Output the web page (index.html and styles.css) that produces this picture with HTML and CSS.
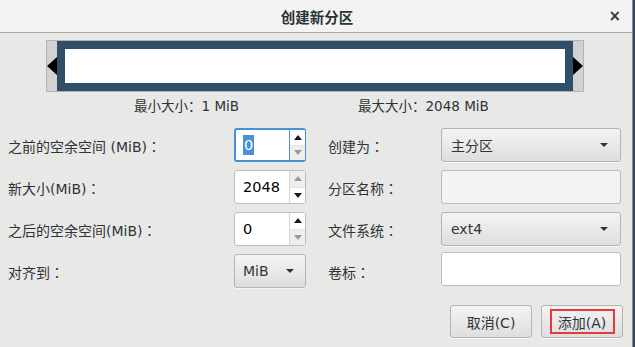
FILE: index.html
```html
<!DOCTYPE html>
<html lang="zh-CN">
<head>
<meta charset="utf-8">
<title>创建新分区</title>
<link rel="stylesheet" href="styles.css">
</head>
<body>
<div class="dialog">
  <div class="titlebar">
    <span class="title">创建新分区</span>
    <span class="close">×</span>
  </div>

  <div class="pbar">
    <div class="arrow arrow-left"></div>
    <div class="navy"><div class="white"></div></div>
    <div class="arrow arrow-right"></div>
  </div>

  <div class="sizes">
    <span class="size-min">最小大小<span class="c">：</span>1 MiB</span>
    <span class="size-max">最大大小<span class="c">：</span>2048 MiB</span>
  </div>

  <div class="form">
    <div class="label">之前的空余空间 (MiB)<span class="c">：</span></div>
    <div class="spin focused">
      <div class="spin-val"><span class="sel">0</span></div>
      <div class="spin-btns">
        <div class="sb up"><span class="tri-up"></span></div>
        <div class="sb down dis"><span class="tri-down"></span></div>
      </div>
    </div>
    <div></div>
    <div class="label">创建为<span class="c">：</span></div>
    <div class="combo wide"><span>主分区</span><span class="tri-down dark"></span></div>

    <div class="label">新大小(MiB)<span class="c">：</span></div>
    <div class="spin">
      <div class="spin-val">2048</div>
      <div class="spin-btns">
        <div class="sb up dis"><span class="tri-up"></span></div>
        <div class="sb down"><span class="tri-down"></span></div>
      </div>
    </div>
    <div></div>
    <div class="label">分区名称<span class="c">：</span></div>
    <div class="entry insensitive"></div>

    <div class="label">之后的空余空间(MiB)<span class="c">：</span></div>
    <div class="spin">
      <div class="spin-val">0</div>
      <div class="spin-btns">
        <div class="sb up"><span class="tri-up"></span></div>
        <div class="sb down dis"><span class="tri-down"></span></div>
      </div>
    </div>
    <div></div>
    <div class="label">文件系统<span class="c">：</span></div>
    <div class="combo wide"><span>ext4</span><span class="tri-down dark"></span></div>

    <div class="label">对齐到<span class="c">：</span></div>
    <div class="combo small"><span>MiB</span><span class="tri-down dark"></span></div>
    <div></div>
    <div class="label">卷标<span class="c">：</span></div>
    <div class="entry label-entry"></div>
  </div>

  <div class="actions">
    <button class="btn">取消(C)</button>
    <button class="btn"><span class="hl">添加(A)</span></button>
  </div>
</div>
</body>
</html>
```

FILE: styles.css
```css
html, body {
  margin: 0;
  padding: 0;
  background: #34495e;
}
body {
  width: 635px;
  height: 347px;
  overflow: hidden;
  font-family: "DejaVu Sans", "Noto Sans CJK SC", sans-serif;
  color: #2e3436;
}
.c {
  font-family: "Noto Sans CJK TC", "Noto Sans CJK JP", sans-serif;
}
.dialog {
  width: 632px;
  height: 347px;
  background: #e8e8e7;
  border-right: 1px solid #8c8c8c;
  display: flex;
  flex-direction: column;
}
.titlebar {
  height: 32px;
  flex: none;
  background: #f3f3f3;
  border-bottom: 1px solid #a8a8a8;
  position: relative;
  display: flex;
  align-items: center;
  justify-content: center;
}
.title {
  font-size: 14.5px;
  font-family: "Noto Sans CJK SC", sans-serif;
  font-weight: 700;
  color: #2e3436;
  margin-left: 2px;
}
.close {
  position: absolute;
  right: 11px;
  top: 7px;
  font-size: 15px;
  font-weight: bold;
  color: #2e3436;
}
.pbar {
  margin: 7px 0 0 46px;
  width: 536px;
  height: 50px;
  border: 1px solid #b2b2b2;
  background: #d2d2d2;
  display: flex;
  align-items: stretch;
}
.arrow {
  width: 10px;
  flex: none;
  align-self: center;
  height: 18px;
  background: #000;
}
.arrow-left { clip-path: polygon(0 50%, 100% 0, 100% 100%); }
.arrow-right { clip-path: polygon(0 0, 100% 50%, 0 100%); }
.navy {
  flex: 1;
  background: #304d6a;
  padding: 8px;
  display: flex;
}
.white {
  flex: 1;
  background: #fff;
}
.sizes {
  height: 20px;
  margin-top: 3px;
  padding-left: 134px;
  display: flex;
  align-items: center;
  font-size: 13.5px;
  color: #2e3436;
}
.size-min { width: 224px; }
.form {
  margin-top: 13px;
  padding-left: 8px;
  display: grid;
  grid-template-columns: 226px 72px 22px 113px 180px;
  grid-auto-rows: 34px;
  row-gap: 8px;
}
.label {
  font-size: 14px;
  display: flex;
  align-items: center;
  padding-top: 1px;
}
.spin {
  box-sizing: border-box;
  border: 1px solid #bcbcbc;
  border-radius: 3px;
  background: #fff;
  display: flex;
  overflow: hidden;
}
.spin.focused {
  border: 2px solid #4a90d9;
  border-right-width: 1px;
}
.spin-val {
  flex: 1;
  display: flex;
  align-items: center;
  padding-left: 8px;
  font-size: 14.5px;
  color: #000;
}
.spin.focused .spin-val { padding-left: 7px; }
.sel {
  background: #4a90d9;
  color: #fff;
  padding: 0 1px;
  line-height: 20px;
}
.spin-btns {
  width: 15px;
  border-left: 1px solid #d6d6d6;
  display: flex;
  flex-direction: column;
}
.spin.focused .spin-btns { border-left-color: #4a90d9; }
.sb {
  flex: 1;
  display: flex;
  align-items: center;
  justify-content: center;
  background: #fff;
}
.sb.dis { background: #eeeeee; }
.sb.up { border-bottom: 1px solid #e4e4e4; }
.tri-up {
  width: 0; height: 0;
  border-left: 4.5px solid transparent;
  border-right: 4.5px solid transparent;
  border-bottom: 5px solid #1a1a1a;
}
.tri-down {
  width: 0; height: 0;
  border-left: 4.5px solid transparent;
  border-right: 4.5px solid transparent;
  border-top: 5px solid #1a1a1a;
}
.dis .tri-up { border-bottom-color: #9a9a9a; }
.dis .tri-down { border-top-color: #9a9a9a; }
.tri-down.dark {
  border-left-width: 4px;
  border-right-width: 4px;
  border-top-width: 4px;
  border-top-color: #2e3436;
}
.combo, .btn {
  box-sizing: border-box;
  border: 1px solid #b4b4b4;
  border-radius: 3px;
  background: linear-gradient(#f4f4f4, #dedede);
  box-shadow: 0 1px 0 rgba(255,255,255,0.6);
  font-size: 14px;
  color: #2e3436;
}
.combo {
  display: flex;
  align-items: center;
  justify-content: space-between;
}
.combo.wide { padding: 0 12px 0 9px; }
.combo.small { padding: 0 11px 0 8px; }
.entry {
  box-sizing: border-box;
  border: 1px solid #bcbcbc;
  border-radius: 3px;
  background: #fff;
}
.entry.insensitive { background: #f3f3f3; }
.label-entry { margin-top: -2px; margin-bottom: 2px; }
.actions {
  margin-top: 17px;
  padding-right: 9px;
  display: flex;
  justify-content: flex-end;
  gap: 9px;
}
.btn {
  width: 82px;
  height: 33px;
  font-family: "DejaVu Sans", "Noto Sans CJK SC", sans-serif;
  padding: 0;
  display: flex;
  align-items: center;
  justify-content: center;
}
.hl {
  box-sizing: border-box;
  width: 65px;
  height: 25px;
  border: 2px solid #e8393a;
  display: flex;
  align-items: center;
  justify-content: center;
}
```
